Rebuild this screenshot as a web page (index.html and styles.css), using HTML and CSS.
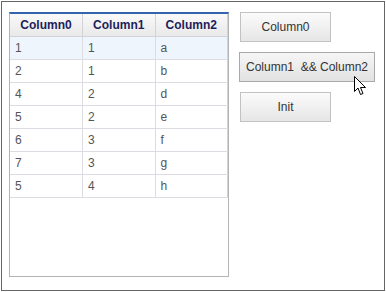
FILE: index.html
```html
<!DOCTYPE html>
<html lang="en">
<head>
    <meta charset="UTF-8">
    <link rel="stylesheet" href="styles.css">
    <title>Grid Sort</title>
</head>
<body>
    <div class="frame">
        <div class="grid">
            <table class="grid-table">
                <thead>
                    <tr><th>Column0</th><th>Column1</th><th>Column2</th></tr>
                </thead>
                <tbody>
                    <tr class="selected"><td>1</td><td>1</td><td>a</td></tr>
                    <tr><td>2</td><td>1</td><td>b</td></tr>
                    <tr><td>4</td><td>2</td><td>d</td></tr>
                    <tr><td>5</td><td>2</td><td>e</td></tr>
                    <tr><td>6</td><td>3</td><td>f</td></tr>
                    <tr><td>7</td><td>3</td><td>g</td></tr>
                    <tr><td>5</td><td>4</td><td>h</td></tr>
                </tbody>
            </table>
        </div>
        <div class="buttons">
            <button class="btn btn_small">Column0</button>
            <button class="btn btn_wide hover">Column1  &amp;&amp; Column2</button>
            <button class="btn btn_small">Init</button>
        </div>
        <svg class="cursor" width="13" height="20" viewBox="0 0 13 20">
            <path d="M0.5 0.5 L0.5 15.5 L4 12 L6.5 18.5 L9 17.5 L6.5 11.5 L11.5 11.5 Z" fill="#fff" stroke="#000" stroke-width="1" stroke-linejoin="miter"/>
        </svg>
    </div>
</body>
</html>
```

FILE: styles.css
```css
body, html {
    margin: 0;
    background-color: #fff;
    font-family: "Liberation Sans", Arial, sans-serif;
    font-size: 12px;
}

.frame {
    position: relative;
    box-sizing: border-box;
    width: 384px;
    height: 290px;
    margin: 1px;
    border: 1px solid #666;
    padding: 10px 0 0 7px;
    display: flex;
    align-items: flex-start;
    gap: 10px;
}

.grid {
    box-sizing: border-box;
    width: 220px;
    height: 265px;
    border: 1px solid #b4b4b4;
    border-top: 2px solid #3464b0;
}

.grid-table {
    width: 100%;
    border-collapse: collapse;
    table-layout: fixed;
}

.grid-table th {
    height: 22px;
    padding: 0;
    background: linear-gradient(#f9f9f9, #e9e9e9);
    border-right: 1px solid #d2d2d8;
    border-bottom: 1px solid #d2d2d8;
    color: #1e1e5a;
    font-weight: bold;
    text-align: center;
}

.grid-table td {
    height: 22px;
    padding: 0 0 0 5px;
    border-right: 1px solid #dcdce2;
    border-bottom: 1px solid #dcdce2;
    color: #555;
}

.grid-table th:last-child,
.grid-table td:last-child {
    border-right: 1px solid #d2d2d8;
}

.grid-table tr.selected td {
    background-color: #eef5fc;
}

.buttons {
    display: flex;
    flex-direction: column;
    align-items: flex-start;
    gap: 10px;
}

.btn {
    box-sizing: border-box;
    height: 30px;
    padding: 0;
    border: 1px solid #c2c2c2;
    background: linear-gradient(#fbfbfb, #e6e6e6);
    color: #333;
    font-family: "Liberation Sans", Arial, sans-serif;
    font-size: 12px;
    white-space: pre;
}

.btn_small {
    width: 91px;
    margin-left: 1px;
}

.btn_wide {
    width: 136px;
}

.btn.hover {
    border-color: #a9a9a9;
    background: linear-gradient(#f6f6f6, #e2e2e2);
}

.cursor {
    position: absolute;
    left: 352px;
    top: 74px;
}
```
